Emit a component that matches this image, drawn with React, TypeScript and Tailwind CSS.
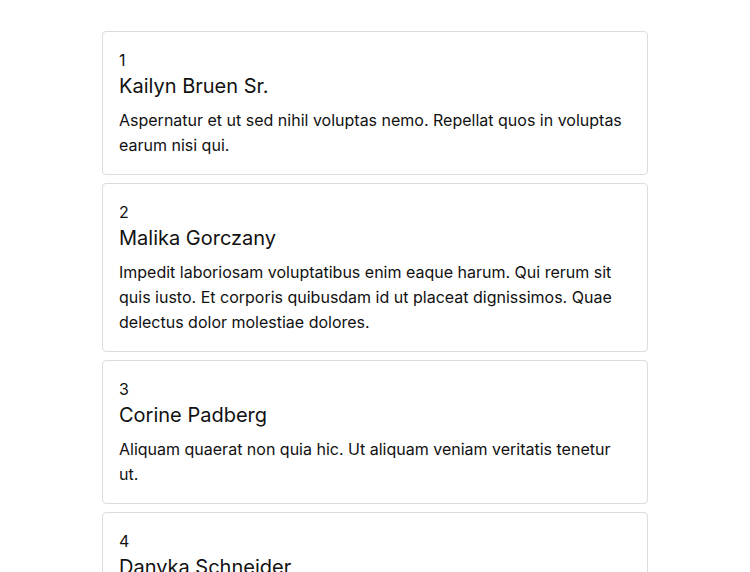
const posts = [
  {
    id: 1,
    name: "Kailyn Bruen Sr.",
    body: "Aspernatur et ut sed nihil voluptas nemo. Repellat quos in voluptas earum nisi qui.",
  },
  {
    id: 2,
    name: "Malika Gorczany",
    body: "Impedit laboriosam voluptatibus enim eaque harum. Qui rerum sit quis iusto. Et corporis quibusdam id ut placeat dignissimos. Quae delectus dolor molestiae dolores.",
  },
  {
    id: 3,
    name: "Corine Padberg",
    body: "Aliquam quaerat non quia hic. Ut aliquam veniam veritatis tenetur ut.",
  },
  {
    id: 4,
    name: "Danyka Schneider",
    body: "Voluptatem quia sint dolorem ut et. Eum dolores et quos aut corporis sed.",
  },
];

function Card({ id, name, body }: { id: number; name: string; body: string }) {
  return (
    <div className="border border-[#dcdcdc] rounded-[4px] bg-white px-4 pt-4 pb-4">
      <div className="text-[16px] leading-[24px]">{id}</div>
      <div className="text-[20px] leading-[28px] mb-2">{name}</div>
      <p className="text-[16px] leading-[25px] pr-1">{body}</p>
    </div>
  );
}

export default function App() {
  return (
    <div
      className="min-h-screen bg-white text-[#111] pt-[31px]"
      style={{ fontFamily: "Inter, 'Noto Sans', sans-serif" }}
    >
      <div className="w-[546px] mx-auto flex flex-col gap-2">
        {posts.map((p) => (
          <Card key={p.id} {...p} />
        ))}
      </div>
    </div>
  );
}
